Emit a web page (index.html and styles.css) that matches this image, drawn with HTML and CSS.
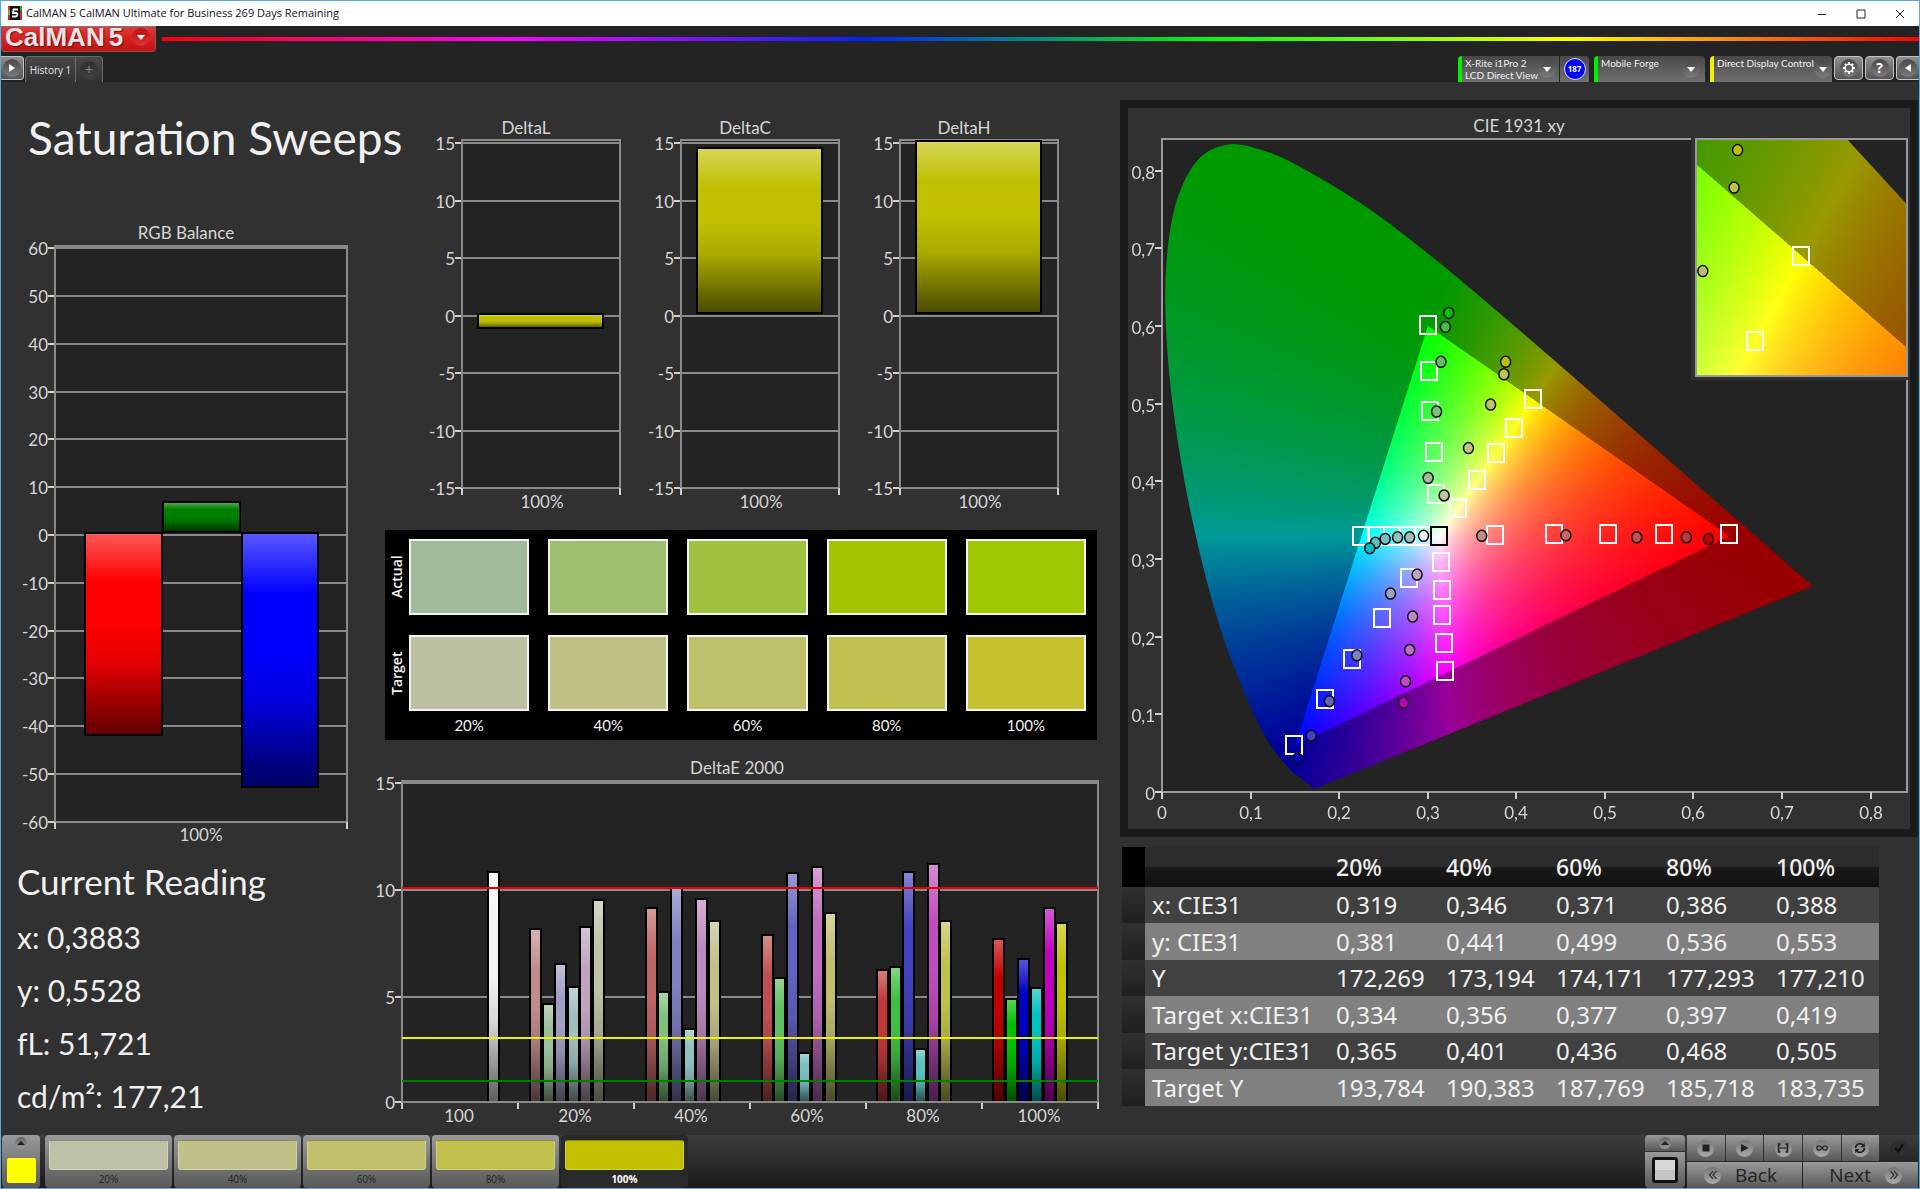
FILE: index.html
```html
<!DOCTYPE html>
<html lang="en">
<head>
<meta charset="utf-8">
<title>CalMAN 5 CalMAN Ultimate for Business</title>
<link rel="stylesheet" href="styles.css">
</head>
<body>
<div class="window">
  <div class="titlebar">
    <svg class="app-icon" viewBox="0 0 14 14" aria-hidden="true">
      <rect width="14" height="14" fill="#111"/>
      <path d="M0 0h2v4H0z" fill="#d33"/><path d="M0 4h2v5H0z" fill="#7a2"/><path d="M0 9h2v5H0z" fill="#c22"/>
      <path d="M12 0h2v4h-2z" fill="#2b2"/><path d="M12 4h2v5h-2z" fill="#b33"/><path d="M12 9h2v5h-2z" fill="#d22"/>
      <path d="M10 3.500H5.500L5 7h3q1.500 0 1.500 1.500T8 10.500H4" fill="none" stroke="#fff" stroke-width="1.800"/>
    </svg>
    <span class="titlebar-text">CalMAN 5 CalMAN Ultimate for Business 269 Days Remaining</span>
    <div class="window-buttons">
      <button aria-label="Minimize"><svg viewBox="0 0 12 12"><path d="M2 6.500h8"/></svg></button>
      <button aria-label="Maximize"><svg viewBox="0 0 12 12"><path d="M2 2h8v8H2z"/></svg></button>
      <button aria-label="Close"><svg viewBox="0 0 12 12"><path d="M2 2l8 8M10 2l-8 8"/></svg></button>
    </div>
  </div>

  <header class="header">
    <div class="brand-row">
      <button class="brand" aria-label="CalMAN 5 menu"><span class="brand-name">CalMAN</span><span class="brand-name">5</span><span class="dot dot-red"><i class="caret"></i></span></button>
      <div class="rainbow"></div>
    </div>
    <div class="tool-row">
      <button class="square-button flush-left" aria-label="Expand"><span class="dot"><i class="caret caret-right"></i></span></button>
      <nav class="tabs">
        <button class="tab">History 1</button>
        <button class="tab tab-add" aria-label="Add tab"><span class="dot dot-dim">+</span></button>
      </nav>
      <div class="devices">
        <button class="device device-green device-meter"><span class="device-name">X-Rite i1Pro 2<br>LCD Direct View</span><span class="dot"><i class="caret"></i></span></button>
        <span class="counter"><span class="counter-value">187</span></span>
        <button class="device device-green device-source"><span class="device-name">Mobile Forge</span><span class="dot"><i class="caret"></i></span></button>
        <button class="device device-yellow device-display"><span class="device-name">Direct Display Control</span><span class="dot"><i class="caret"></i></span></button>
        <button class="square-button" aria-label="Settings"><span class="dot"><svg viewBox="0 0 16 16"><circle cx="8" cy="8" r="3.800" fill="none" stroke="#fff" stroke-width="1.500"/><path d="M8 2v2M8 12v2M2 8h2M12 8h2M3.800 3.800l1.400 1.400M10.800 10.800l1.400 1.400M3.800 12.200l1.400-1.400M10.800 5.200l1.400-1.400" stroke="#fff" stroke-width="1.800"/></svg></span></button>
        <button class="square-button" aria-label="Help"><span class="dot dot-help">?</span></button>
        <button class="square-button flush-right" aria-label="Collapse"><span class="dot"><i class="caret caret-left"></i></span></button>
      </div>
    </div>
  </header>

  <main class="workspace">
    <section class="column column-left">
      <h1 class="page-title">Saturation Sweeps</h1>
      <svg class="chart" id="rgb-balance" viewBox="1 218 373 637" role="img" aria-label="RGB Balance"></svg>
      <div class="reading">
        <h2 class="reading-title">Current Reading</h2>
        <p>x: 0,3883</p>
        <p>y: 0,5528</p>
        <p>fL: 51,721</p>
        <p>cd/m²: 177,21</p>
      </div>
    </section>

    <section class="column column-middle">
      <div class="delta-row">
        <svg class="chart" id="delta-l" viewBox="427 115 219 405" role="img" aria-label="DeltaL"></svg>
        <svg class="chart" id="delta-c" viewBox="427 115 219 405" role="img" aria-label="DeltaC"></svg>
        <svg class="chart" id="delta-h" viewBox="427 115 219 405" role="img" aria-label="DeltaH"></svg>
      </div>
      <div class="swatches">
        <div class="swatch-row">
          <span class="swatch-label">Actual</span>
          <div class="swatch-cells"><i class="swatch actual-20"></i><i class="swatch actual-40"></i><i class="swatch actual-60"></i><i class="swatch actual-80"></i><i class="swatch actual-100"></i></div>
        </div>
        <div class="swatch-row">
          <span class="swatch-label">Target</span>
          <div class="swatch-cells"><i class="swatch target-20"></i><i class="swatch target-40"></i><i class="swatch target-60"></i><i class="swatch target-80"></i><i class="swatch target-100"></i></div>
        </div>
        <div class="swatch-cells swatch-steps"><span>20%</span><span>40%</span><span>60%</span><span>80%</span><span>100%</span></div>
      </div>
      <svg class="chart" id="delta-e" viewBox="374 750 731 380" role="img" aria-label="DeltaE 2000"></svg>
    </section>

    <section class="column column-right">
      <div class="cie-panel">
        <svg class="chart" id="cie" viewBox="1128 108 782 721" role="img" aria-label="CIE 1931 xy"></svg>
      </div>
      <table class="readings-table">
        <colgroup><col class="col-gutter"><col class="col-name"><col class="col-value"><col class="col-value"><col class="col-value"><col class="col-value"><col class="col-value"></colgroup>
        <thead><tr><td></td><td></td><th>20%</th><th>40%</th><th>60%</th><th>80%</th><th>100%</th></tr></thead>
        <tbody>
          <tr><td></td><th>x: CIE31</th><td>0,319</td><td>0,346</td><td>0,371</td><td>0,386</td><td>0,388</td></tr>
          <tr><td></td><th>y: CIE31</th><td>0,381</td><td>0,441</td><td>0,499</td><td>0,536</td><td>0,553</td></tr>
          <tr><td></td><th>Y</th><td>172,269</td><td>173,194</td><td>174,171</td><td>177,293</td><td>177,210</td></tr>
          <tr><td></td><th>Target x:CIE31</th><td>0,334</td><td>0,356</td><td>0,377</td><td>0,397</td><td>0,419</td></tr>
          <tr><td></td><th>Target y:CIE31</th><td>0,365</td><td>0,401</td><td>0,436</td><td>0,468</td><td>0,505</td></tr>
          <tr><td></td><th>Target Y</th><td>193,784</td><td>190,383</td><td>187,769</td><td>185,718</td><td>183,735</td></tr>
        </tbody>
      </table>
    </section>
  </main>

  <footer class="footer">
    <button class="metal picker" aria-label="Current colour"><span class="knob"><i class="caret caret-up"></i></span><i class="picker-color"></i></button>
    <div class="steps">
      <button class="metal step"><i class="step-color step-20"></i>20%</button>
      <button class="metal step"><i class="step-color step-40"></i>40%</button>
      <button class="metal step"><i class="step-color step-60"></i>60%</button>
      <button class="metal step"><i class="step-color step-80"></i>80%</button>
      <button class="metal step step-active"><i class="step-color step-100"></i>100%</button>
    </div>
    <div class="transport">
      <div class="pattern">
        <button class="metal pattern-up" aria-label="Pattern list"><span class="knob"><i class="caret caret-up"></i></span></button>
        <button class="metal pattern-window" aria-label="Pattern window"><i class="pattern-square"></i></button>
      </div>
      <div class="transport-grid">
        <div class="transport-buttons">
          <button class="metal" aria-label="Stop"><span class="knob knob-large"><svg viewBox="0 0 16 16"><path d="M4 4h8v8H4z" fill="#222"/></svg></span></button>
          <button class="metal" aria-label="Play"><span class="knob knob-large"><svg viewBox="0 0 16 16"><path d="M4.500 3.500l9 4.500-9 4.500z" fill="#222"/></svg></span></button>
          <button class="metal" aria-label="Read series"><span class="knob knob-large"><svg viewBox="0 0 16 16"><path d="M5 3.500H3v9h2M11 3.500h2v9h-2" fill="none" stroke="#222" stroke-width="2"/><path d="M5 8h1.500M7.300 8h1.400M9.500 8H11" stroke="#222" stroke-width="2"/></svg></span></button>
          <button class="metal" aria-label="Continuous"><span class="knob knob-large"><svg viewBox="0 0 16 16"><path d="M8 8C6.500 6 5.500 5.500 4.500 5.500a2.500 2.500 0 0 0 0 5C5.500 10.500 6.500 10 8 8s2.500-2.500 3.500-2.500a2.500 2.500 0 0 1 0 5C10.500 10.500 9.500 10 8 8z" fill="none" stroke="#222" stroke-width="1.500"/></svg></span></button>
          <button class="metal" aria-label="Refresh"><span class="knob knob-large"><svg viewBox="0 0 16 16"><path d="M3 8a5 5 0 0 1 8.500-3.500M13 8a5 5 0 0 1-8.500 3.500" fill="none" stroke="#222" stroke-width="2"/><path d="M13.500 2v5h-5zM2.500 14V9h5z" fill="#222"/></svg></span></button>
          <button class="metal metal-dark" aria-label="Accept"><span class="knob knob-large knob-dark"><svg viewBox="0 0 16 16"><path d="M4 8l3 4 5.500-8" fill="none" stroke="#0c0c0c" stroke-width="2.500"/></svg></span></button>
        </div>
        <div class="transport-nav">
          <button class="metal nav-button nav-back"><span class="knob knob-large"><svg viewBox="0 0 16 16"><path d="M8 3.500L4 8l4 4.500M12 3.500L8 8l4 4.500" fill="none" stroke="#333" stroke-width="1.500"/></svg></span>Back</button>
          <button class="metal nav-button nav-next">Next<span class="knob knob-large"><svg viewBox="0 0 16 16"><path d="M4 3.500L8 8l-4 4.500M8 3.500l4 4.500-4 4.500" fill="none" stroke="#333" stroke-width="1.500"/></svg></span></button>
        </div>
      </div>
    </div>
  </footer>
</div>
<script src="charts.js"></script>
</body>
</html>
```

FILE: styles.css
```css
* { box-sizing: border-box; }

body {
  margin: 0;
  background: #313131;
  color: #f0f0f0;
  font-family: Lato, "Open Sans", sans-serif;
}

h1, h2, p { margin: 0; font-weight: 400; }

button {
  margin: 0;
  padding: 0;
  border: 0;
  color: inherit;
  font: inherit;
}

.window {
  display: flex;
  flex-direction: column;
  min-height: 100vh;
  border: 1px solid #5fa9dc;
}

/* Title bar */
.titlebar {
  display: flex;
  align-items: center;
  height: 25px;
  padding: 0 0 2px 7px;
  background: #fff;
  color: #111;
  font: 11px/22px "Open Sans", sans-serif;
}
.app-icon { width: 14px; height: 14px; margin-right: 4px; }
.window-buttons { display: flex; margin-left: auto; }
.window-buttons button { width: 39px; height: 22px; background: none; }
.window-buttons svg { width: 12px; height: 12px; vertical-align: middle; fill: none; stroke: #222; }

/* Header */
.header { background: #232323; }
.brand-row { display: flex; height: 26px; }
.brand {
  display: flex;
  align-items: center;
  gap: 4px;
  width: 155px;
  padding: 0 0 4px 3px;
  border: 1px solid #8e5555;
  border-top-color: #777;
  border-radius: 0 0 4px 4px;
  background: linear-gradient(#e03a3a, #d42020 50%, #c41212);
}
.brand-name {
  color: #e4e4e4;
  font: bold 26px/20px "Liberation Sans", sans-serif;
  text-shadow: 1px 1px 1px #6a1010;
}
.rainbow {
  flex: 1;
  height: 4px;
  margin: 11px 0 0 6px;
  background: linear-gradient(90deg, #f00, #f0f 20%, #02f 40%, #0f0 60%, #ff0 80%, #f00);
}
.tool-row { display: flex; align-items: flex-end; height: 30px; }

.dot {
  display: flex;
  flex: none;
  align-items: center;
  justify-content: center;
  width: 18px;
  height: 18px;
  border-radius: 50%;
  background: linear-gradient(#484848, #7c7c7c);
}
.dot svg { width: 16px; height: 16px; }
.dot-red { margin-left: 5px; background: linear-gradient(#b51414, #e03030); }
.dot-dim { background: linear-gradient(#303030, #404040); color: #888; font: 14px/18px "Open Sans", sans-serif; }
.dot-help { color: #fff; font: bold 14px/18px "Open Sans", sans-serif; }
.caret { border: solid transparent; border-width: 5px 4px 0; border-top-color: #fff; }
.caret-right { border-width: 4px 0 4px 6px; border-color: transparent; border-left-color: #fff; }
.caret-left { border-width: 4px 6px 4px 0; border-color: transparent; border-right-color: #fff; }
.caret-up { border-width: 0 4px 4px; border-color: transparent; border-bottom-color: #222; }

.square-button {
  display: flex;
  align-items: center;
  justify-content: center;
  width: 29px;
  height: 24px;
  margin-bottom: 2px;
  border: 1px solid #c4c4c4;
  border-radius: 4px;
  background: linear-gradient(#8e8e8e, #555);
}
.flush-left { width: 23px; border-radius: 0 4px 4px 0; border-left: 0; }
.flush-right { width: 23px; border-radius: 4px 0 0 4px; border-right: 0; }

.tabs { display: flex; height: 26px; margin-left: 1px; }
.tab {
  width: 51px;
  border: 1px solid #6a6a6a;
  border-bottom: 0;
  border-radius: 4px 0 0 0;
  background: linear-gradient(#484848, #333);
  color: #e4e4e4;
  font: 10px/24px "Open Sans", sans-serif;
  white-space: nowrap;
}
.tab-add { display: flex; align-items: center; justify-content: center; width: 28px; margin-left: -1px; border-radius: 0 4px 0 0; }

.devices { display: flex; align-items: flex-end; gap: 2px; margin-left: auto; }
.device {
  display: flex;
  justify-content: space-between;
  height: 26px;
  padding-right: 5px;
  border-left: 4px solid;
  border-radius: 4px 4px 0 0;
  background: linear-gradient(#484848, #707070);
  text-align: left;
}
.device .dot { margin-top: 4px; }
.device-green { border-left-color: #00f000; }
.device-yellow { border-left-color: #f0f000; }
.device-name { padding: 1px 0 0 3px; color: #f0f0f0; font: 10px/12px Lato, sans-serif; white-space: nowrap; }
.device-meter { width: 101px; padding-right: 8px; border-top-right-radius: 0; }
.device-source { width: 111px; margin-right: 3px; }
.device-display { width: 122px; padding-right: 2px; }
.counter {
  display: flex;
  align-items: center;
  justify-content: center;
  width: 29px;
  height: 26px;
  margin: 0 3px 0 -1px;
  border-radius: 0 4px 0 0;
  background: linear-gradient(#484848, #707070);
}
.counter-value {
  width: 22px;
  height: 22px;
  border: 1px solid #d8d8ff;
  border-radius: 50%;
  background: #00f;
  color: #fff;
  font: bold 8px/20px "Open Sans", sans-serif;
  text-align: center;
}

/* Workspace */
.workspace {
  display: grid;
  flex: 1;
  grid-template-columns: 373fr 731fr 814fr;
  align-items: start;
}
.column { min-width: 0; }
.chart { display: block; width: 100%; height: auto; }
.chart text { fill: #d6d6d6; font-family: Lato, sans-serif; font-size: 17px; }

.page-title { height: 136px; padding: 28px 0 0 27px; font-size: 46px; line-height: 56px; white-space: nowrap; }
.reading { padding-left: 16px; font-size: 30px; line-height: 53px; }
.reading-title { padding-bottom: 3px; font-size: 35px; line-height: 53px; }

.column-middle { padding-top: 33px; }
.delta-row { display: grid; grid-template-columns: repeat(3, 1fr); padding: 0 21px 0 53px; }
.swatches { margin: 10px 8px 10px 11px; padding: 9px 11px 5px 0; background: #000; }
.swatch-row { display: flex; height: 76px; margin-bottom: 20px; }
.swatch-row:nth-child(2) { margin-bottom: 4px; }
.swatch-label {
  width: 24px;
  color: #f4f4f4;
  font: 600 14px/24px "Open Sans", sans-serif;
  text-align: center;
  writing-mode: vertical-rl;
  transform: rotate(180deg);
}
.swatch-cells { display: grid; flex: 1; grid-template-columns: repeat(5, 1fr); gap: 19px; }
.swatch { border: 2px solid #f4f4ee; }
.swatch-steps { padding-left: 24px; color: #f4f4f4; font-size: 15px; line-height: 20px; text-align: center; }
.actual-20 { background: #a0bb98; }
.actual-40 { background: #a0be70; }
.actual-60 { background: #a0c240; }
.actual-80 { background: #a0c400; }
.actual-100 { background: #a0c800; }
.target-20 { background: #bebfa3; }
.target-40 { background: #c0c087; }
.target-60 { background: #bfc06b; }
.target-80 { background: #c0c04f; }
.target-100 { background: #c4c02e; }

.column-right { padding: 18px 1px 0 15px; }
.cie-panel { border: 8px solid #1b1b1b; }

.readings-table {
  width: 757px;
  margin: 10px 0 0 2px;
  border-collapse: collapse;
  table-layout: fixed;
  font: 24px/34px "Noto Sans", "Open Sans", sans-serif;
}
.col-gutter { width: 23px; }
.col-name { width: 184px; }
.col-value { width: 110px; }
.readings-table th, .readings-table td { height: 36px; padding: 0 0 0 7px; font-weight: 400; text-align: left; white-space: nowrap; }
.readings-table tbody tr:nth-child(even) td { height: 37px; }
.readings-table thead tr { background: linear-gradient(#2c2c2c 50%, #1a1a1a 50%, #101010); }
.readings-table thead th { height: 40px; font-size: 23px; font-weight: 500; }
.readings-table thead td:first-child { background: #000; }
.readings-table tbody tr { background: #414141; }
.readings-table tbody tr:nth-child(even) { background: #808080; }
.readings-table tbody td:first-child { background: linear-gradient(#303030, #1f1f1f); }

/* Footer */
.footer {
  display: flex;
  height: 53px;
  padding: 0 1px;
  background: linear-gradient(#3c3c3c, #1a1a1a);
}
.metal { background: linear-gradient(#9a9a9a, #585858); color: #222; }
.metal-dark { background: linear-gradient(#3c3c3c, #262626); }
.knob {
  display: flex;
  align-items: center;
  justify-content: center;
  width: 12px;
  height: 12px;
  border-radius: 50%;
  background: linear-gradient(#666, #999);
}
.knob-large { width: 17px; height: 17px; background: linear-gradient(#777, #aaa); }
.knob-dark { background: #2e2e2e; }
.knob svg { width: 14px; height: 14px; }

.picker { display: flex; flex-direction: column; align-items: center; gap: 9px; width: 38px; padding-top: 2px; border-radius: 4px; }
.picker-color { width: 29px; height: 25px; border-radius: 2px; background: #ff0; }
.steps { display: flex; gap: 2px; margin-left: 5px; }
.step { display: flex; flex-direction: column; width: 127px; padding: 5px 4px 0; border-radius: 4px; font: 10px/18px "Open Sans", sans-serif; text-align: center; }
.step-active { background: #2a2a2a; color: #fff; font-weight: 700; }
.step-color { height: 30px; border: 1px solid #ffffff44; border-top-color: #00000044; border-radius: 3px; }
.step-20 { background: #c0c0a6; }
.step-40 { background: #c1c088; }
.step-60 { background: #c0c06a; }
.step-80 { background: #c0c04c; }
.step-100 { background: #c0c000; }

.transport { display: flex; gap: 2px; margin-left: auto; }
.pattern { display: flex; flex-direction: column; gap: 1px; width: 40px; }
.pattern-up { display: flex; align-items: center; justify-content: center; height: 16px; border-radius: 4px 4px 0 0; }
.pattern-window { display: flex; align-items: center; justify-content: center; height: 36px; border-radius: 0 0 4px 4px; }
.pattern-square { width: 26px; height: 26px; border: 3px solid #111; border-radius: 3px; background: linear-gradient(#d8d8d8 50%, #c4c4c4 50%); }
.transport-grid { width: 231px; }
.transport-buttons { display: grid; grid-template-columns: repeat(6, 1fr); gap: 1px; height: 26px; }
.transport-buttons .metal { display: flex; align-items: center; justify-content: center; }
.transport-nav { display: grid; grid-template-columns: 1fr 1fr; gap: 1px; margin-top: 1px; height: 26px; }
.nav-button { display: flex; align-items: center; gap: 14px; font: 19px/24px "Open Sans", sans-serif; }
.nav-back { padding-left: 17px; }
.nav-next { justify-content: flex-end; padding-right: 16px; }
```

FILE: charts.js
```js
const SVG = 'http://www.w3.org/2000/svg';

function add(parent, name, attrs, text) {
  const el = document.createElementNS(SVG, name);
  for (const key in attrs) el.setAttribute(key, attrs[key]);
  if (text !== undefined) el.textContent = text;
  parent.appendChild(el);
  return el;
}

function line(svg, x1, y1, x2, y2, stroke, width) {
  add(svg, 'line', { x1, y1, x2, y2, stroke: stroke || '#8a8a8a', 'stroke-width': width || 2 });
}

function label(svg, x, y, text, anchor) {
  add(svg, 'text', { x, y, 'text-anchor': anchor || 'middle' }, text);
}

/* Shared glossy overlay: light at the top of a bar, dark at its foot. */
function gloss(svg) {
  const id = svg.id + '-gloss';
  const gradient = add(svg, 'linearGradient', { id, x1: 0, y1: 0, x2: 0, y2: 1 });
  [[0, '#fff', 0.35], [0.24, '#fff', 0], [0.45, '#000', 0], [0.65, '#000', 0.12], [1, '#000', 0.62]].forEach(([offset, color, opacity]) =>
    add(gradient, 'stop', { offset, 'stop-color': color, 'stop-opacity': opacity }));
  return 'url(#' + id + ')';
}

function bar(svg, overlay, x, y, width, height, fill) {
  const box = { x: x + 1, y: y + 1, width: width - 2, height: height - 2 };
  add(svg, 'rect', { ...box, fill });
  add(svg, 'rect', { ...box, fill: overlay, stroke: '#000', 'stroke-width': 2 });
}

function frame(svg, f, ticks) {
  add(svg, 'rect', { x: f.left, y: f.top, width: f.right - f.left, height: f.bottom - f.top, fill: '#232323' });
  ticks.forEach(([text, y]) => {
    line(svg, f.left, y, f.right, y);
    line(svg, f.left - 7, y, f.left, y, '#d0d0d0');
    label(svg, f.left - 7, y + 7, text, 'end');
  });
  add(svg, 'path', { d: `M${f.left} ${f.bottom + 6}V${f.top}H${f.right}V${f.bottom + 6}`, fill: 'none', stroke: '#8a8a8a', 'stroke-width': 2 });
  f.marks.forEach(x => line(svg, x, f.bottom, x, f.bottom + 7, '#d0d0d0'));
}

/* RGB balance */
(function () {
  const svg = document.getElementById('rgb-balance');
  const y = v => 535 - v * 4.78;
  const overlay = gloss(svg);
  const ticks = [];
  for (let v = 60; v >= -60; v -= 10) ticks.push([v, Math.round(y(v))]);
  label(svg, 186, 239, 'RGB Balance');
  frame(svg, { left: 55, right: 347, top: 246, bottom: 822, marks: [55, 347] }, ticks);
  bar(svg, overlay, 84, 532, 79, 204, '#f00');
  bar(svg, overlay, 162, 501, 79, 32, '#008000');
  bar(svg, overlay, 241, 532, 78, 256, '#00f');
  label(svg, 201, 841, '100%');
})();

/* Delta L, C and H */
[['delta-l', 'DeltaL', 313, 16], ['delta-c', 'DeltaC', 147, 167], ['delta-h', 'DeltaH', 140, 174]].forEach(([id, title, top, height]) => {
  const svg = document.getElementById(id);
  const overlay = gloss(svg);
  const ticks = [15, 10, 5, 0, -5, -10, -15].map(v => [v, Math.round(315.500 - v * 11.5)]);
  label(svg, 526, 134, title);
  frame(svg, { left: 462, right: 620, top: 140, bottom: 488, marks: [462, 620] }, ticks);
  bar(svg, overlay, 477, top, 127, height, '#c0c000');
  label(svg, 542, 508, '100%');
});

/* Patch colours by hue, from 20% to 100% saturation */
const HUES = {
  red: ['#c08c8c', '#c06666', '#c05050', '#c03838', '#c00000'],
  green: ['#9cc09c', '#7cc07c', '#60c060', '#40c040', '#00c000'],
  blue: ['#a0a0c4', '#8080c0', '#6262c0', '#4242c0', '#0000c0'],
  cyan: ['#a0bfbf', '#90c0c0', '#78c0c0', '#5cc0c0', '#00c0c0'],
  magenta: ['#c0a4c0', '#c088c0', '#c06cc0', '#c04cc0', '#c000c0'],
  yellow: ['#c0c0a4', '#c0c088', '#c0c06c', '#c0c04c', '#c0c000']
};

/* DeltaE 2000 */
(function () {
  const svg = document.getElementById('delta-e');
  const overlay = gloss(svg);
  const y = v => Math.round(1103 - v * 21.33);
  const groups = [
    [8.2, 4.7, 6.55, 5.5, 8.3, 9.55],
    [9.2, 5.25, 10.15, 3.5, 9.6, 8.6],
    [7.9, 5.9, 10.85, 2.4, 11.1, 8.95],
    [6.3, 6.4, 10.9, 2.6, 11.25, 8.6],
    [7.75, 4.9, 6.8, 5.45, 9.2, 8.5]
  ];
  label(svg, 737, 774, 'DeltaE 2000');
  frame(svg, { left: 402, right: 1098, top: 781, bottom: 1102, marks: [402, 518, 634, 750, 866, 982, 1098] },
    [[15, 783], [10, 890], [5, 997], [0, 1102]]);
  bar(svg, overlay, 487, y(10.9), 13, 1103 - y(10.9), '#f4f4f4');
  groups.forEach((values, g) => Object.values(HUES).forEach((hue, i) => {
    const top = y(values[i]);
    bar(svg, overlay, Math.round(529 + g * 115.8 + i * 12.6), top, 13, 1103 - top, hue[g]);
  }));
  line(svg, 402, 1102, 1098, 1102);
  line(svg, 402, 888, 1098, 888, '#e80000');
  line(svg, 402, 1038, 1098, 1038, '#f0f000');
  line(svg, 402, 1081, 1098, 1081, '#008000');
  ['100', '20%', '40%', '60%', '80%', '100%'].forEach((text, i) => label(svg, 459 + i * 116, 1122, text));
})();

/* CIE 1931 chromaticity diagram */
(function () {
  const svg = document.getElementById('cie');
  const DENSITY = 2;
  const locus = [[.1741, .005], [.1714, .0051], [.1689, .0069], [.1644, .0109], [.1566, .0177], [.144, .0297], [.1241, .0578],
    [.1096, .0868], [.0913, .1327], [.0687, .2007], [.0454, .295], [.0235, .4127], [.0082, .5384], [.0039, .6548], [.0139, .7502],
    [.0389, .812], [.0743, .8338], [.1142, .8262], [.1547, .8059], [.2296, .7543], [.3016, .6923], [.3731, .6245], [.4441, .5547],
    [.5125, .4866], [.5752, .4242], [.627, .3725], [.6658, .334], [.6915, .3083], [.719, .2809], [.7347, .2653]];

  function color(x, y) {
    const X = x / y, Z = (1 - x - y) / y;
    const rgb = [3.2406 * X - 1.5372 - .4986 * Z, -.9689 * X + 1.8758 + .0415 * Z, .0557 * X - .204 + 1.057 * Z];
    const outside = Math.min(...rgb) < -1e-3;
    const scale = 255 * (outside ? .6 : 1) / Math.max(...rgb);
    return rgb.map(c => Math.max(0, c) * scale);
  }

  /* view: pixel box on the chart plus the x/y range that it covers */
  function paint(view) {
    const { left, top, x0, y0, spanX, spanY } = view;
    const width = view.width * DENSITY, height = view.height * DENSITY;
    const px = x => (x - x0) / spanX * width;
    const py = y => height - (y - y0) / spanY * height;
    const holder = add(svg, 'foreignObject', { x: left, y: top, width: view.width, height: view.height });
    const canvas = document.createElement('canvas');
    const fill = document.createElement('canvas');
    canvas.className = 'chart';
    canvas.width = fill.width = width;
    canvas.height = fill.height = height;
    const fillCtx = fill.getContext('2d');
    const image = fillCtx.createImageData(width, height);
    for (let j = 0; j < height; j++) {
      for (let i = 0; i < width; i++) {
        const y = Math.max(1e-3, y0 + (height - j) / height * spanY);
        const [r, g, b] = color(x0 + i / width * spanX, y);
        const at = (j * width + i) * 4;
        image.data[at] = r;
        image.data[at + 1] = g;
        image.data[at + 2] = b;
        image.data[at + 3] = 255;
      }
    }
    fillCtx.putImageData(image, 0, 0);
    const ctx = canvas.getContext('2d');
    ctx.fillStyle = '#232323';
    ctx.fillRect(0, 0, width, height);
    ctx.beginPath();
    ctx.moveTo(px(locus[0][0]), py(locus[0][1]));
    for (let k = 0; k < locus.length - 1; k++) {
      const a = locus[Math.max(0, k - 1)], b = locus[k], c = locus[k + 1], d = locus[Math.min(locus.length - 1, k + 2)];
      ctx.bezierCurveTo(px(b[0] + (c[0] - a[0]) / 6), py(b[1] + (c[1] - a[1]) / 6),
        px(c[0] - (d[0] - b[0]) / 6), py(c[1] - (d[1] - b[1]) / 6), px(c[0]), py(c[1]));
    }
    ctx.closePath();
    ctx.fillStyle = ctx.createPattern(fill, 'no-repeat');
    ctx.fill();
    holder.appendChild(canvas);
    return { x: v => left + px(v) / DENSITY, y: v => top + py(v) / DENSITY };
  }

  const targets = [
    [.3, .601], [.301, .542], [.303, .491], [.307, .438], [.309, .384],
    [.419, .506], [.397, .469], [.377, .437], [.356, .402], [.334, .366],
    [.376, .3306], [.443, .332], [.503, .332], [.5665, .332], [.64, .332],
    [.315, .296], [.316, .26], [.316, .228], [.318, .192], [.319, .156],
    [.279, .276], [.248, .224], [.215, .171], [.184, .12], [.149, .061],
    [.2246, .33], [.242, .33], [.2595, .33], [.277, .33], [.2943, .33]];
  const readings = {
    red: [[.361, .33], [.456, .3306], [.536, .328], [.592, .328], [.617, .326]],
    green: [[.3005, .4045], [.31, .49], [.315, .554], [.32, .599], [.3237, .617]],
    blue: [[.258, .2555], [.22, .176], [.189, .117], [.1684, .0726], [.153, .043]],
    cyan: [[.2796, .328], [.266, .328], [.252, .326], [.241, .321], [.2345, .314]],
    magenta: [[.288, .28], [.283, .226], [.2796, .183], [.275, .1425], [.2727, .115]],
    yellow: [[.3185, .382], [.346, .443], [.371, .499], [.386, .538], [.388, .554]]
  };

  const square = (cx, cy, stroke) => add(svg, 'rect', { x: Math.round(cx) - 8, y: Math.round(cy) - 9, width: 16, height: 18, fill: 'none', stroke, 'stroke-width': 2 });
  const circle = (cx, cy, fill) => add(svg, 'ellipse', { cx, cy, rx: 5, ry: 5.5, fill, stroke: '#111', 'stroke-width': 1.5 });

  label(svg, 1519, 132, 'CIE 1931 xy');
  const main = paint({ left: 1162, top: 139, width: 744, height: 653, x0: 0, y0: 0, spanX: .84, spanY: .841 });
  add(svg, 'rect', { x: 1162, y: 139, width: 745, height: 653, fill: 'none', stroke: '#9a9a9a', 'stroke-width': 2 });
  for (let i = 0; i <= 8; i++) {
    const text = i ? '0,' + i : '0';
    const x = Math.round(main.x(i / 10)), y = Math.round(main.y(i / 10));
    line(svg, x, 792, x, 799, '#d0d0d0');
    line(svg, 1155, y, 1162, y, '#d0d0d0');
    label(svg, x, 819, text);
    label(svg, 1155, y + 8, text, 'end');
  }
  targets.forEach(([x, y]) => square(main.x(x), main.y(y), '#fff'));
  Object.keys(readings).forEach(hue => readings[hue].forEach(([x, y], i) => circle(main.x(x), main.y(y), HUES[hue][i])));
  circle(main.x(.2953), main.y(.33), '#fff');
  square(main.x(.3128), main.y(.33), '#000');

  /* Close-up of the selected target */
  add(svg, 'rect', { x: 1691, y: 137, width: 219, height: 243, fill: '#313131' });
  const detail = paint({ left: 1696, top: 139, width: 210, height: 237, x0: .368, y0: .4525, spanX: .102, spanY: .105 });
  add(svg, 'rect', { x: 1696, y: 139, width: 211, height: 237, fill: 'none', stroke: '#9a9a9a', 'stroke-width': 2 });
  square(detail.x(.419), detail.y(.5055), '#fff');
  square(detail.x(.3966), detail.y(.468), '#fff');
  circle(detail.x(.3713), detail.y(.499), HUES.yellow[2]);
  circle(detail.x(.3865), detail.y(.536), HUES.yellow[3]);
  circle(detail.x(.3882), detail.y(.5526), HUES.yellow[4]);
})();
```
